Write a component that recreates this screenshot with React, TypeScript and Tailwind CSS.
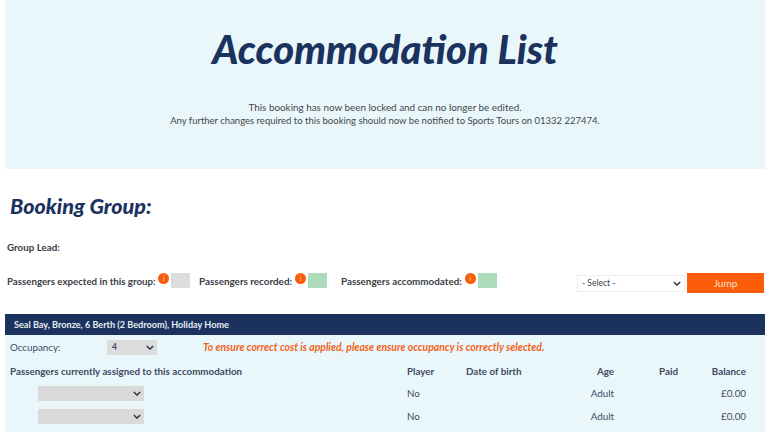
import React from "react";

const font = { fontFamily: "Lato, 'Noto Sans', sans-serif" };

const Info: React.FC = () => (
  <span className="flex h-[11px] w-[11px] shrink-0 items-center justify-center rounded-full bg-[#f95c0b] text-[7px] leading-none text-[#fbd9c4]">
    i
  </span>
);

const Counter: React.FC<{ label: string; color: string; className: string; labelClass: string }> = ({
  label,
  color,
  className,
  labelClass,
}) => (
  <div className={`flex items-start ${className}`}>
    <span className={`mt-[1px] font-bold leading-[14px] text-[#3a3d45] ${labelClass}`}>{label}</span>
    <span className="ml-[3px]"><Info /></span>
    <span className={`ml-[2px] h-[15px] w-[19px] ${color}`} />
  </div>
);

const Caret: React.FC<{ className?: string }> = ({ className }) => (
  <svg viewBox="0 0 10 6" className={`h-[5px] w-[8px] ${className ?? ""}`} fill="none" stroke="#2f3542" strokeWidth="1.8">
    <path d="M1 1l4 4 4-4" />
  </svg>
);

const rows = [0, 1];

const App: React.FC = () => {
  return (
    <div className="h-[432px] w-[768px] overflow-hidden bg-white pl-[5px] pr-[3px]" style={font}>
      {/* Header */}
      <section className="flex h-[169px] flex-col items-center bg-[#eaf7fa] pt-[26px]">
        <h1 className="text-[40px] font-black italic leading-[46px] text-[#1b325f]">Accommodation List</h1>
        <p className="mt-[29px] text-center text-[9.5px] leading-[13px] text-[#43464d]">
          <span className="text-[9.9px]">This booking has now been locked and can no longer be edited.</span>
          <br />
          Any further changes required to this booking should now be notified to Sports Tours on 01332 227474.
        </p>
      </section>

      {/* Booking group */}
      <h2 className="mt-[25px] pl-[5px] text-[21.5px] font-black italic leading-[24px] text-[#1b325f]">Booking Group:</h2>
      <p className="mt-[23px] pl-[2px] text-[9.8px] font-bold leading-[12px] text-[#3a3d45]">Group Lead:</p>

      <div className="mt-[20px] flex h-[20px] items-start pl-[2px]">
        <Counter label="Passengers expected in this group:" labelClass="text-[9.7px]" color="bg-[#dcdcdc]" className="w-[192px]" />
        <Counter label="Passengers recorded:" labelClass="text-[9.9px]" color="bg-[#addcba]" className="w-[142px]" />
        <Counter label="Passengers accommodated:" labelClass="text-[9.85px]" color="bg-[#addcba]" className="w-[236px]" />
        <div className="mt-[2px] flex h-[17px] w-[108px] items-center justify-between border border-[#eeeeee] pl-[4px] pr-[3px] text-[8.5px] text-[#3a3d45]">
          <span>- Select -</span>
          <Caret />
        </div>
        <button className="ml-[2px] flex h-[20px] w-[77px] items-center justify-center bg-[#fc5d08] text-[10px] text-[#fbe3d3]">
          Jump
        </button>
      </div>

      {/* Accommodation */}
      <div className="mt-[21px] flex h-[21px] items-center bg-[#1b325f] pl-[9px] text-[9.1px] font-bold text-[#e6edf2]">
        Seal Bay, Bronze, 6 Berth (2 Bedroom), Holiday Home
      </div>
      <div className="h-[100px] bg-[#eaf7fa] px-[5px] text-[9.8px] text-[#3d4a63]">
        <div className="flex h-[25px] items-center">
          <span className="w-[97px]">Occupancy:</span>
          <div className="flex h-[15px] w-[50px] items-center justify-between bg-[#dcdcdc] pl-[5px] pr-[3px] text-[8.5px] font-bold">
            4
            <Caret />
          </div>
          <span className="ml-[46px] text-[10.4px] font-bold italic text-[#f2621c]">
            To ensure correct cost is applied, please ensure occupancy is correctly selected.
          </span>
        </div>
        <div className="flex h-[22px] items-center font-bold">
          <span className="w-[397px]">Passengers currently assigned to this accommodation</span>
          <span className="w-[59px]">Player</span>
          <span className="w-[70px]">Date of birth</span>
          <span className="w-[78px] text-right">Age</span>
          <span className="w-[64px] text-right">Paid</span>
          <span className="w-[68px] text-right">Balance</span>
        </div>
        {rows.map((r) => (
          <div key={r} className="flex h-[23px] items-center">
            <div className="ml-[28px] flex h-[15px] w-[106px] items-center justify-end bg-[#d9d9d9] pr-[3px]">
              <Caret />
            </div>
            <span className="ml-[263px] w-[59px]">No</span>
            <span className="w-[148px] text-right">Adult</span>
            <span className="ml-[64px] w-[68px] text-right">£0.00</span>
          </div>
        ))}
      </div>
    </div>
  );
};

export default App;
